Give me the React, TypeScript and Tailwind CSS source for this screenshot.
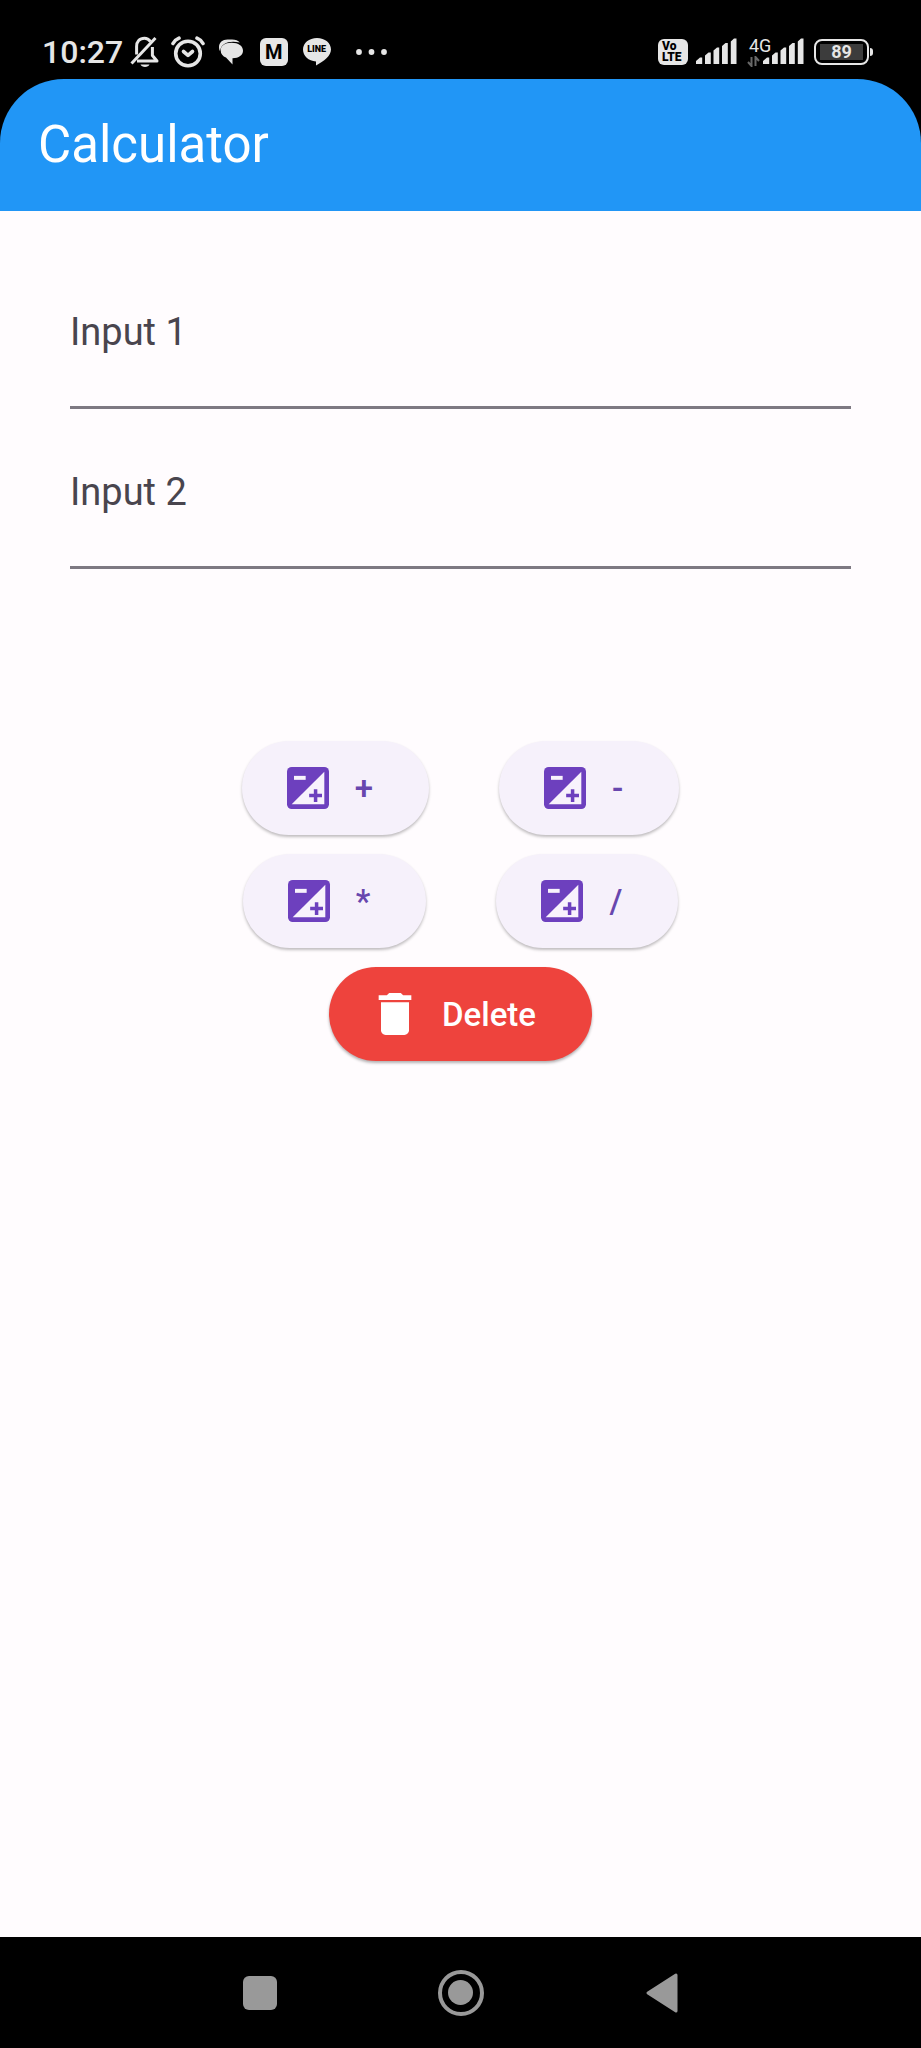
import React from "react";
import { MdDelete } from "react-icons/md";

function BellOffIcon() {
  return (
    <svg width="30" height="32" viewBox="0 0 30 32" fill="none" stroke="#e6e6e6" strokeWidth="3" aria-hidden="true">
      <path d="M20.5 5.5C18.800 3.200 17 2.200 14.500 2.200C9.500 2.200 6.600 5.800 6.600 10.500V18.500" />
      <path d="M7 25H27L22.400 19.500V11" strokeLinejoin="round" />
      <path d="M1.500 27.500L25.500 2" />
      <path d="M10.500 28.500H19.500C18.500 31.800 11.500 31.800 10.500 28.500Z" fill="#e6e6e6" stroke="none" />
    </svg>
  );
}

function AlarmIcon() {
  return (
    <svg width="34" height="32" viewBox="0 0 34 32" fill="none" stroke="#e6e6e6" strokeWidth="3.600" strokeLinecap="round" aria-hidden="true">
      <circle cx="17" cy="17.500" r="12.300" />
      <path d="M2 7.500C3.200 5.200 5.300 3.300 8 2.200M32 7.500C30.800 5.200 28.700 3.300 26 2.200" />
      <path d="M12.500 15.500L17 19.300L21.500 15.500" strokeLinejoin="round" />
    </svg>
  );
}

function ChatIcon() {
  return (
    <svg width="26" height="26" viewBox="0 0 26 26" fill="#e6e6e6" aria-hidden="true">
      <path d="M1 8C1 3.500 4.500 0.500 9.500 0.500H14C17.500 0.500 20.300 1.500 21.800 3.400C11 1.600 3.500 3.500 2 12C1.300 11 1 9.500 1 8Z" />
      <path d="M2.700 11.500C2.700 7 6.500 3.800 13.500 3.800C20.500 3.800 25 7 25 11.700C25 16 21 19 14.500 19.300V25.500L8 18.500C4.800 17.300 2.700 15 2.700 11.500Z" />
    </svg>
  );
}

function SignalIcon() {
  return (
    <svg width="41" height="27" viewBox="0 0 41 27" fill="#e6e6e6" aria-hidden="true">
      <path d="M0 23L4 19.500H6.200V26H0ZM9 17.500L12.500 14.500H14.800V26H9ZM17.500 12.500L21 9.500H23.200V26H17.500ZM26 8L29.500 5H31.800V26H26ZM34.800 3.500L38 0.500H40.500V26H34.800Z" />
    </svg>
  );
}

function DataArrowsIcon() {
  return (
    <svg width="13" height="11" viewBox="0 0 13 11" fill="none" stroke="#686868" strokeWidth="2" aria-hidden="true">
      <path d="M4.500 1V10L1 6M8.500 10V1L12 5" />
    </svg>
  );
}

function ExposureIcon() {
  return (
    <svg className="size-14" viewBox="0 0 24 24" aria-hidden="true">
      <rect x="3" y="3" width="18" height="18" rx="2" fill="#6d40be" />
      <path d="M19 5V19H5Z" fill="#f8f2fc" />
      <rect x="6" y="6.800" width="5" height="1.700" fill="#f8f2fc" />
      <path d="M14.500 12.500H16V14.500H18V16H16V18H14.500V16H12.500V14.500H14.500Z" fill="#6d40be" />
    </svg>
  );
}

function StatusBar() {
  return (
    <div className="flex h-[79px] items-center justify-between bg-black pt-6 pr-12 pl-[42px] text-[#e6e6e6]">
      <div className="flex items-center">
        <span className="text-[32px] leading-8 font-medium">10:27</span>
        <div className="flex items-center">
          <span className="flex w-[43px] justify-center"><BellOffIcon /></span>
          <span className="flex w-[43px] justify-center"><AlarmIcon /></span>
          <span className="flex w-[43px] justify-center"><ChatIcon /></span>
          <span className="flex w-[43px] justify-center">
            <span className="flex size-7 items-center justify-center rounded-md bg-[#e6e6e6] text-xl leading-none font-bold text-black">M</span>
          </span>
          <span className="flex w-[43px] justify-center">
            <span className="grid h-7 w-[30px] place-items-center">
              <svg className="col-start-1 row-start-1" width="30" height="28" viewBox="0 0 30 28" fill="#e6e6e6" aria-hidden="true">
                <path d="M15 0C23 0 29 5 29 11.500C29 18 22 23 14 27.500V23.500C6.500 23 1 18 1 11.500C1 5 7 0 15 0Z" />
              </svg>
              <span className="col-start-1 row-start-1 pb-1 text-[9px] leading-none font-black text-black">LINE</span>
            </span>
          </span>
        </div>
        <svg className="ml-[18px]" width="32" height="6" viewBox="0 0 32 6" fill="#e6e6e6" aria-hidden="true">
          <circle cx="3" cy="3" r="2.900" />
          <circle cx="15.500" cy="3" r="2.900" />
          <circle cx="28" cy="3" r="2.900" />
        </svg>
      </div>
      <div className="flex items-center">
        <span className="flex h-[26px] w-[30px] flex-col justify-center rounded-md bg-[#e6e6e6] pl-1 text-[12px] leading-[11px] font-black text-black">
          <span>Vo</span>
          <span>LTE</span>
        </span>
        <span className="ml-2"><SignalIcon /></span>
        <span className="ml-2.5 flex h-[30px] w-4 flex-col justify-between">
          <span className="pl-0.5 text-lg leading-[18px] whitespace-nowrap">4G</span>
          <DataArrowsIcon />
        </span>
        <SignalIcon />
        <span className="ml-2.5 flex items-center gap-px">
          <span className="flex h-[26px] w-[55px] items-center justify-center rounded-lg border-2 border-[#e6e6e6] p-1">
            <span className="flex h-4 w-full items-center justify-center bg-[#3c3c3c] text-lg leading-none font-bold">89</span>
          </span>
          <span className="h-2 w-[3px] rounded-r-sm bg-[#e6e6e6]" />
        </span>
      </div>
    </div>
  );
}

function Field({ id, label }: { id: string; label: string }) {
  return (
    <div className="flex flex-col">
      <label htmlFor={id} className="text-[38px] leading-14 text-[#49454e]">{label}</label>
      <input id={id} type="text" inputMode="decimal" className="h-[49px] w-full border-b-3 border-[#7e7982] bg-transparent text-[38px] text-[#1d1b1e] outline-none" />
    </div>
  );
}

function OperatorButton({ symbol }: { symbol: string }) {
  return (
    <button type="button" className="flex h-[94px] items-center gap-[19px] rounded-full bg-[#f6f1fb] pr-14 pl-[38px] text-[33px] leading-none font-medium text-[#6847ae] shadow-[0_2px_3px_rgba(0,0,0,0.25)]">
      <ExposureIcon />
      {symbol}
    </button>
  );
}

export default function App() {
  return (
    <div className="flex min-h-screen flex-col bg-[#fffcfe] font-['Roboto',sans-serif]">
      <div className="bg-black">
        <StatusBar />
        <header className="flex h-[132px] items-center rounded-t-[64px] bg-[#2196f6] px-[38px]">
          <h1 className="text-[51px] leading-16 font-normal text-white">Calculator</h1>
        </header>
      </div>
      <main className="flex grow flex-col px-[70px] pt-[93px]">
        <div className="flex flex-col gap-[55px]">
          <Field id="input-1" label="Input 1" />
          <Field id="input-2" label="Input 2" />
        </div>
        <div className="mt-[172px] flex flex-col items-center gap-[19px]">
          <div className="flex gap-[70px]">
            <OperatorButton symbol="+" />
            <OperatorButton symbol="-" />
          </div>
          <div className="flex gap-[70px]">
            <OperatorButton symbol="*" />
            <OperatorButton symbol="/" />
          </div>
          <button type="button" className="flex h-[94px] items-center gap-[19px] rounded-full bg-[#ee433d] pr-14 pl-[38px] text-[33px] leading-none font-medium text-white shadow-[0_2px_3px_rgba(0,0,0,0.3)]">
            <MdDelete className="size-14" aria-hidden="true" />
            Delete
          </button>
        </div>
      </main>
      <nav className="flex h-[111px] justify-center bg-black">
        <div className="grid w-[603px] grid-cols-3">
          <button type="button" aria-label="Recent apps" className="flex items-center justify-center">
            <span className="size-[34px] rounded-md bg-[#999999]" />
          </button>
          <button type="button" aria-label="Home" className="flex items-center justify-center">
            <span className="flex size-[46px] items-center justify-center rounded-full border-4 border-[#999999]">
              <span className="size-[25px] rounded-full bg-[#999999]" />
            </span>
          </button>
          <button type="button" aria-label="Back" className="flex items-center justify-center">
            <svg width="32" height="40" viewBox="0 0 32 40" fill="#999999" stroke="#999999" strokeWidth="3" strokeLinejoin="round" aria-hidden="true">
              <path d="M2 20L30 2V38Z" />
            </svg>
          </button>
        </div>
      </nav>
    </div>
  );
}
